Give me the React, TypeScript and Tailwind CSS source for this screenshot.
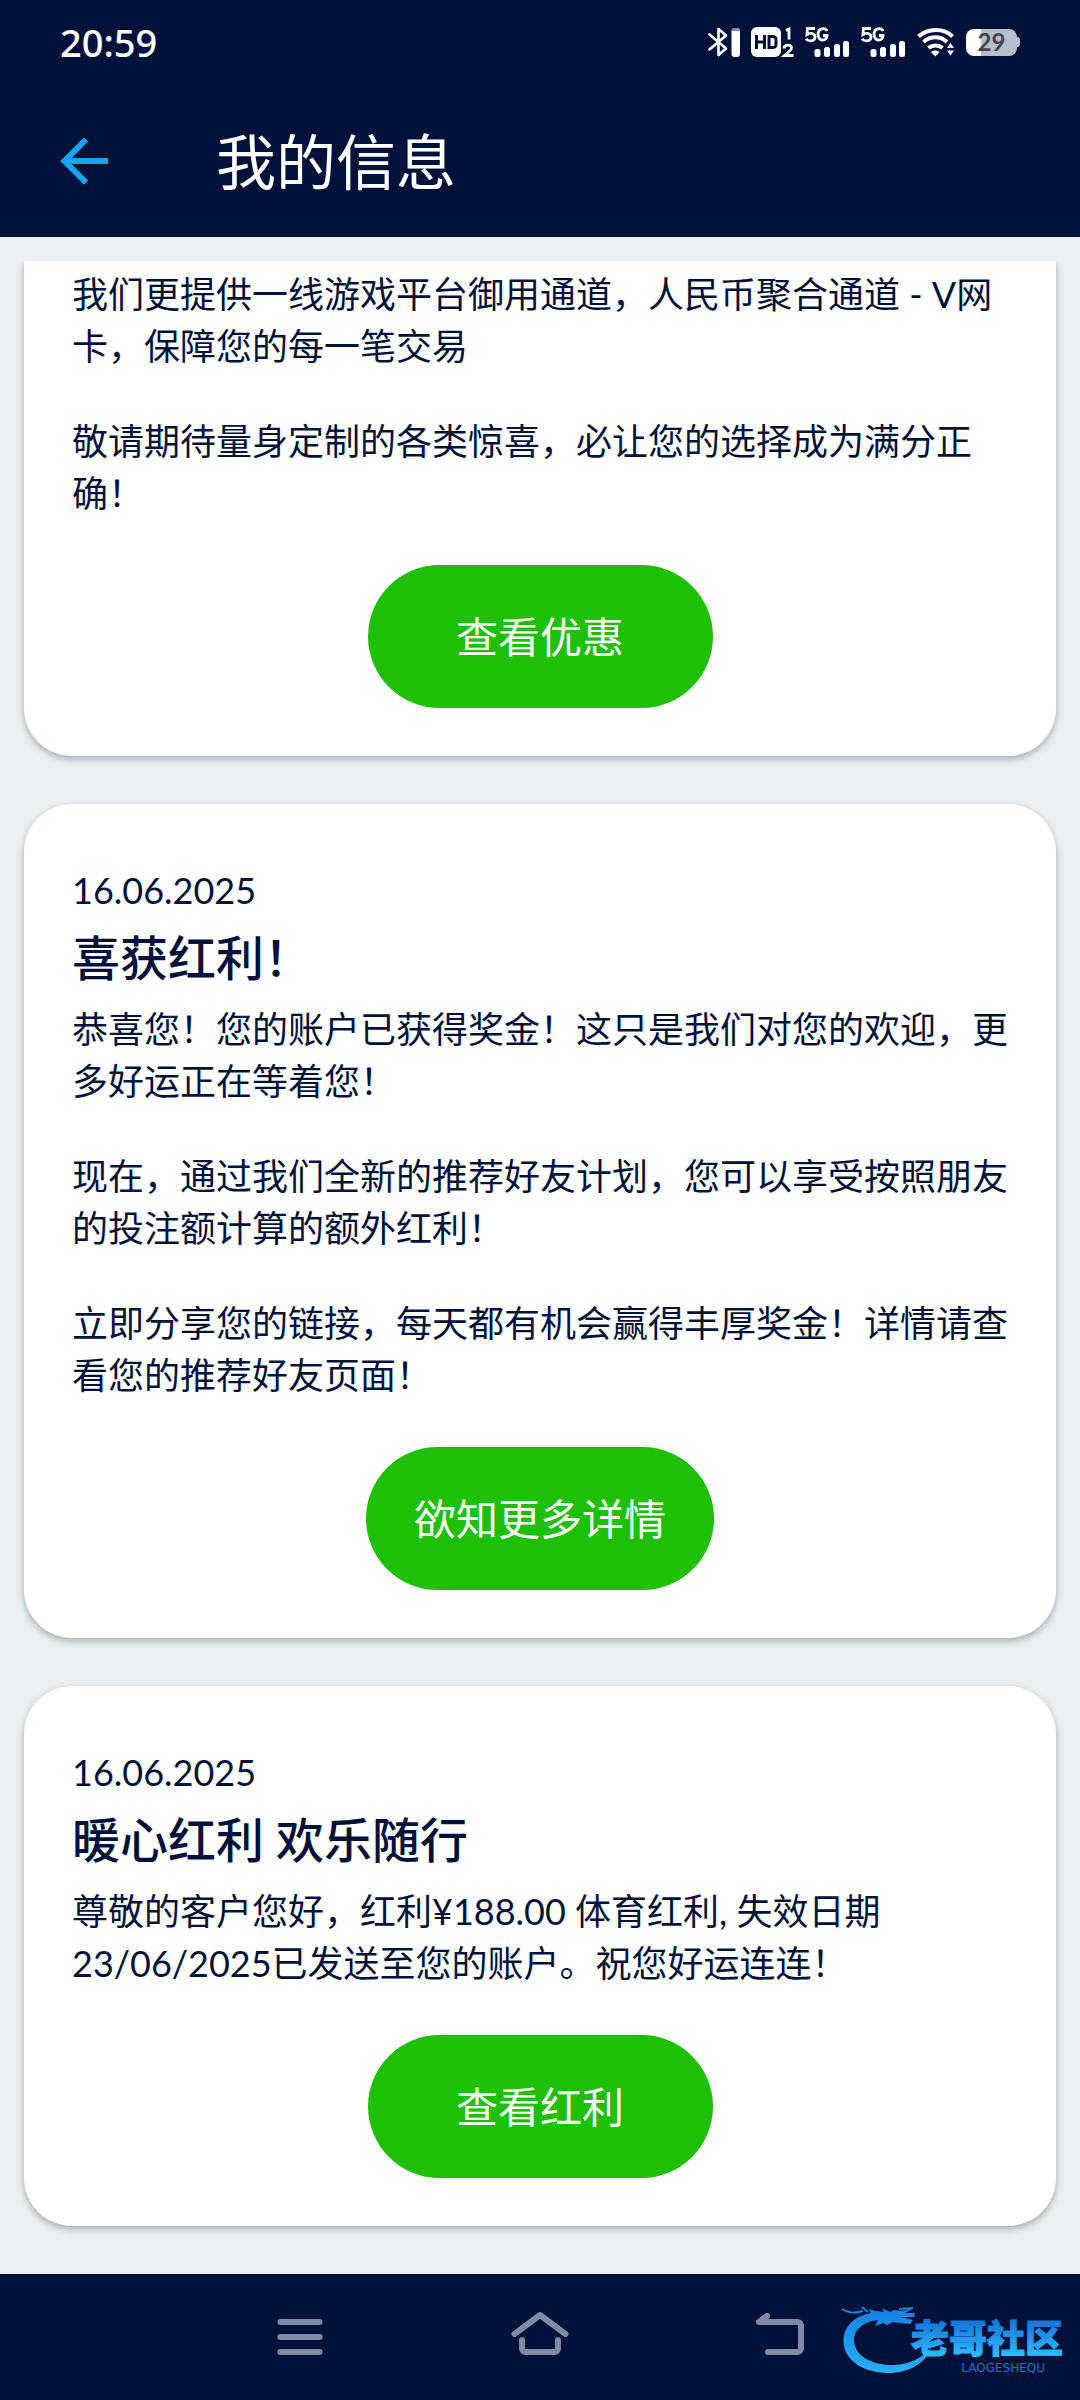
import React from "react";

type Message = {
  id: string;
  date?: string;
  title?: string;
  paragraphs: string[];
  action: string;
};

const messages: Message[] = [
  {
    id: "channels",
    paragraphs: [
      "我们更提供一线游戏平台御用通道，人民币聚合通道 - V网卡，保障您的每一笔交易",
      "敬请期待量身定制的各类惊喜，必让您的选择成为满分正确！",
    ],
    action: "查看优惠",
  },
  {
    id: "bonus",
    date: "16.06.2025",
    title: "喜获红利！",
    paragraphs: [
      "恭喜您！您的账户已获得奖金！这只是我们对您的欢迎，更多好运正在等着您！",
      "现在，通过我们全新的推荐好友计划，您可以享受按照朋友的投注额计算的额外红利！",
      "立即分享您的链接，每天都有机会赢得丰厚奖金！详情请查看您的推荐好友页面！",
    ],
    action: "欲知更多详情",
  },
  {
    id: "sports",
    date: "16.06.2025",
    title: "暖心红利 欢乐随行",
    paragraphs: [
      "尊敬的客户您好，红利¥188.00 体育红利, 失效日期 23/06/2025已发送至您的账户。祝您好运连连！",
    ],
    action: "查看红利",
  },
];

function BluetoothIcon() {
  return (
    <svg width="32" height="30" viewBox="0 0 32 30" fill="none" aria-label="蓝牙">
      <path
        d="M1.500 7.500L18 21.500L10.500 28V2L18 8.500L1.500 22.500"
        stroke="white"
        strokeWidth="2.600"
        strokeLinejoin="round"
        strokeLinecap="round"
      />
      <rect x="23.500" y="1" width="8.500" height="29" rx="3" fill="white" />
      <path d="M23.500 4a3 3 0 0 1 3-3h2.500a3 3 0 0 1 3 3z" fill="#7f88a0" />
    </svg>
  );
}

function HdIcon() {
  return (
    <svg width="43" height="30" viewBox="0 0 43 30" aria-label="HD">
      <rect width="30" height="30" rx="6" fill="white" />
      <path
        d="M5.500 8v14M13.500 8v14M5.500 15h8M18 9.500h4a3 3 0 0 1 3 3v5a3 3 0 0 1-3 3h-4z"
        stroke="#00123a"
        strokeWidth="3"
        fill="none"
      />
      <path d="M35 3.500l3-1.500v10.500" stroke="white" strokeWidth="2.800" fill="none" />
      <path
        d="M33 21.500c0-4.500 7.500-4.500 7.500-.5 0 2-3 4-7 7.500h9"
        stroke="white"
        strokeWidth="2.800"
        fill="none"
      />
    </svg>
  );
}

function SignalIcon() {
  return (
    <svg width="45" height="30" viewBox="0 0 45 30" fill="white" aria-label="5G">
      <path
        d="M10 1.500H2.500L2 7.500c3-2 8-1.500 8 2.500 0 4.500-6.500 5-9 1.800M22 4c-1.500-3.500-9-3.500-9 3.500s9 7.500 9 1h-4"
        stroke="white"
        strokeWidth="2.800"
        fill="none"
      />
      <rect x="9.500" y="22" width="6" height="8" rx="2.500" />
      <rect x="19" y="20" width="6" height="10" rx="2.500" />
      <rect x="29" y="17" width="6" height="13" rx="2.500" />
      <rect x="38" y="14" width="6" height="16" rx="2.500" />
    </svg>
  );
}

function WifiIcon() {
  return (
    <svg width="38" height="30" viewBox="0 0 38 30" aria-label="Wi-Fi">
      <g stroke="white" strokeWidth="4" fill="none">
        <path d="M1.500 9.500C11 .800 27 .800 35.500 9.500" />
        <path d="M6.500 15c7-6.200 17-6.200 23.500 0" />
        <path d="M11.500 21c4-3.500 10-3.500 14 0" />
      </g>
      <path d="M14 25c2.500-2 6-2 8.500 0L18.300 29.500z" fill="white" />
      <path d="M33.500 16l3.500 5h-7zM33.500 28.500l3.500-5h-7z" fill="white" />
    </svg>
  );
}

function Battery() {
  return (
    <div className="flex items-center">
      <div className="flex h-[27px] w-[51px] items-center justify-center rounded-lg bg-linear-to-r from-white from-30% to-[#b9bdcc] to-30% font-[Lato] text-2xl font-bold text-[#444448]">
        29
      </div>
      <div className="h-2.5 w-[3px] rounded-r bg-[#b9bdcc]" />
    </div>
  );
}

function StatusBar() {
  return (
    <div className="flex h-[84px] items-center justify-between px-[60px]">
      <time className="font-['Noto_Sans'] text-[38px] leading-[52px] font-medium">20:59</time>
      <div className="flex items-center gap-[11px]">
        <BluetoothIcon />
        <HdIcon />
        <SignalIcon />
        <SignalIcon />
        <WifiIcon />
        <Battery />
      </div>
    </div>
  );
}

function MessageCard({ message }: { message: Message }) {
  const continued = !message.title;
  return (
    <article
      className={
        "bg-white px-12 pb-12 shadow-[0_3px_7px_rgba(0,0,0,0.28)] " +
        (continued ? "rounded-b-[48px] pt-[7px]" : "rounded-[48px] pt-[60px]")
      }
    >
      {message.date && <time className="block text-4xl leading-[52px]">{message.date}</time>}
      {message.title && (
        <h2 className="mb-[3px] text-5xl leading-[84px] font-medium">{message.title}</h2>
      )}
      <div className="flex flex-col gap-[43px]">
        {message.paragraphs.map((text) => (
          <p key={text} className="text-4xl leading-[52px]">
            {text}
          </p>
        ))}
      </div>
      <div className="mt-[46px] flex justify-center">
        <button
          type="button"
          className="h-[143px] min-w-[345px] rounded-full bg-[#1dc004] px-12 text-[42px] leading-[60px] text-white"
        >
          {message.action}
        </button>
      </div>
    </article>
  );
}

function Watermark() {
  return (
    <div className="absolute right-4 bottom-5 h-20 w-[224px]">
      <svg width="224" height="80" viewBox="20 20 224 80" fill="none" role="img" aria-label="老哥社区 LAOGESHEQU">
        <defs>
          <linearGradient id="dragon" x1="0" y1="25" x2="0" y2="93" gradientUnits="userSpaceOnUse">
            <stop stopColor="#157fe0" />
            <stop offset="1" stopColor="#25b0fa" />
          </linearGradient>
          <linearGradient id="wordmark" x1="0" y1="42" x2="0" y2="75" gradientUnits="userSpaceOnUse">
            <stop stopColor="#1577dc" />
            <stop offset="1" stopColor="#2bbcff" />
          </linearGradient>
        </defs>
        <path
          fill="url(#dragon)"
          d="M51 33C34 36 23 47 23.500 62c.8 19 21 31 45 31 20 0 38-10 42.500-25.500C103 78 88 85 72 85 50 85 35 75 34 61c-.5-9 6-17 18-20l6-1-3 6 8-3 4 2 6-3 8 1 9 1 3-4-8-2-5 0 5-1 9 0 1-4-10 0 9-5-12 3-8-1-4 2-8-4 2 4-9-1-6-2 2 4z"
        />
        <path
          stroke="url(#dragon)"
          strokeWidth="2"
          d="M22 29c8 5 15 4 21 2M42 27l6 5M79 29l14-1"
        />
        <text
          x="243"
          y="72"
          textAnchor="end"
          fill="url(#wordmark)"
          stroke="url(#wordmark)"
          className="text-[38px] font-black"
        >
          老哥社区
        </text>
        <text
          x="225"
          y="92"
          textAnchor="end"
          fill="#1a76c4"
          className="font-['DejaVu_Sans'] text-xs"
        >
          LAOGESHEQU
        </text>
      </svg>
    </div>
  );
}

function NavigationBar() {
  const button = "flex h-full w-60 items-center justify-center";
  return (
    <nav className="relative flex h-[126px] justify-center bg-[#00123a] text-[#7f8aa5]">
      <button type="button" aria-label="最近任务" className={button}>
        <svg width="60" height="60" viewBox="0 0 60 60" stroke="currentColor" strokeWidth="6" strokeLinecap="round">
          <path d="M10.500 15H49.500M10.500 30H49.500M10.500 45H49.500" />
        </svg>
      </button>
      <button type="button" aria-label="主屏幕" className={button}>
        <svg width="60" height="60" viewBox="0 0 60 60" fill="none" stroke="currentColor" strokeWidth="6" strokeLinecap="round" strokeLinejoin="round">
          <path d="M4.500 27L30 8L55.500 27M12 33V41.500a3.500 3.500 0 0 0 3.500 3.500H44.500a3.500 3.500 0 0 0 3.500-3.500V33" />
        </svg>
      </button>
      <button type="button" aria-label="返回" className={button}>
        <svg width="60" height="60" viewBox="0 0 60 60" fill="none" stroke="currentColor" strokeWidth="6" strokeLinecap="round" strokeLinejoin="round">
          <path d="M17 9L9 15H47.500a3.500 3.500 0 0 1 3.500 3.500V41.500a3.500 3.500 0 0 1-3.500 3.500H18" />
        </svg>
      </button>
      <Watermark />
    </nav>
  );
}

export default function App() {
  return (
    <div
      lang="zh-CN"
      className="flex min-h-screen flex-col bg-[#ebeff2] font-[Lato,'Noto_Sans_CJK_SC',sans-serif] text-[#00123a]"
    >
      <header className="bg-[#00123a] text-white">
        <StatusBar />
        <div className="flex h-[153px] items-center gap-[108px] pl-[60px]">
          <button type="button" aria-label="返回" className="text-[#18a4f4]">
            <svg width="48" height="48" viewBox="0 0 48 48" fill="none" stroke="currentColor" strokeWidth="6">
              <path d="M26 2.500L4.500 24L26 45.500M4.500 24H48" />
            </svg>
          </button>
          <h1 className="pt-0.5 text-6xl leading-[80px]">我的信息</h1>
        </div>
      </header>
      <main className="mt-6 flex grow flex-col gap-12 overflow-hidden px-6 pb-12">
        {messages.map((message) => (
          <MessageCard key={message.id} message={message} />
        ))}
      </main>
      <NavigationBar />
    </div>
  );
}
